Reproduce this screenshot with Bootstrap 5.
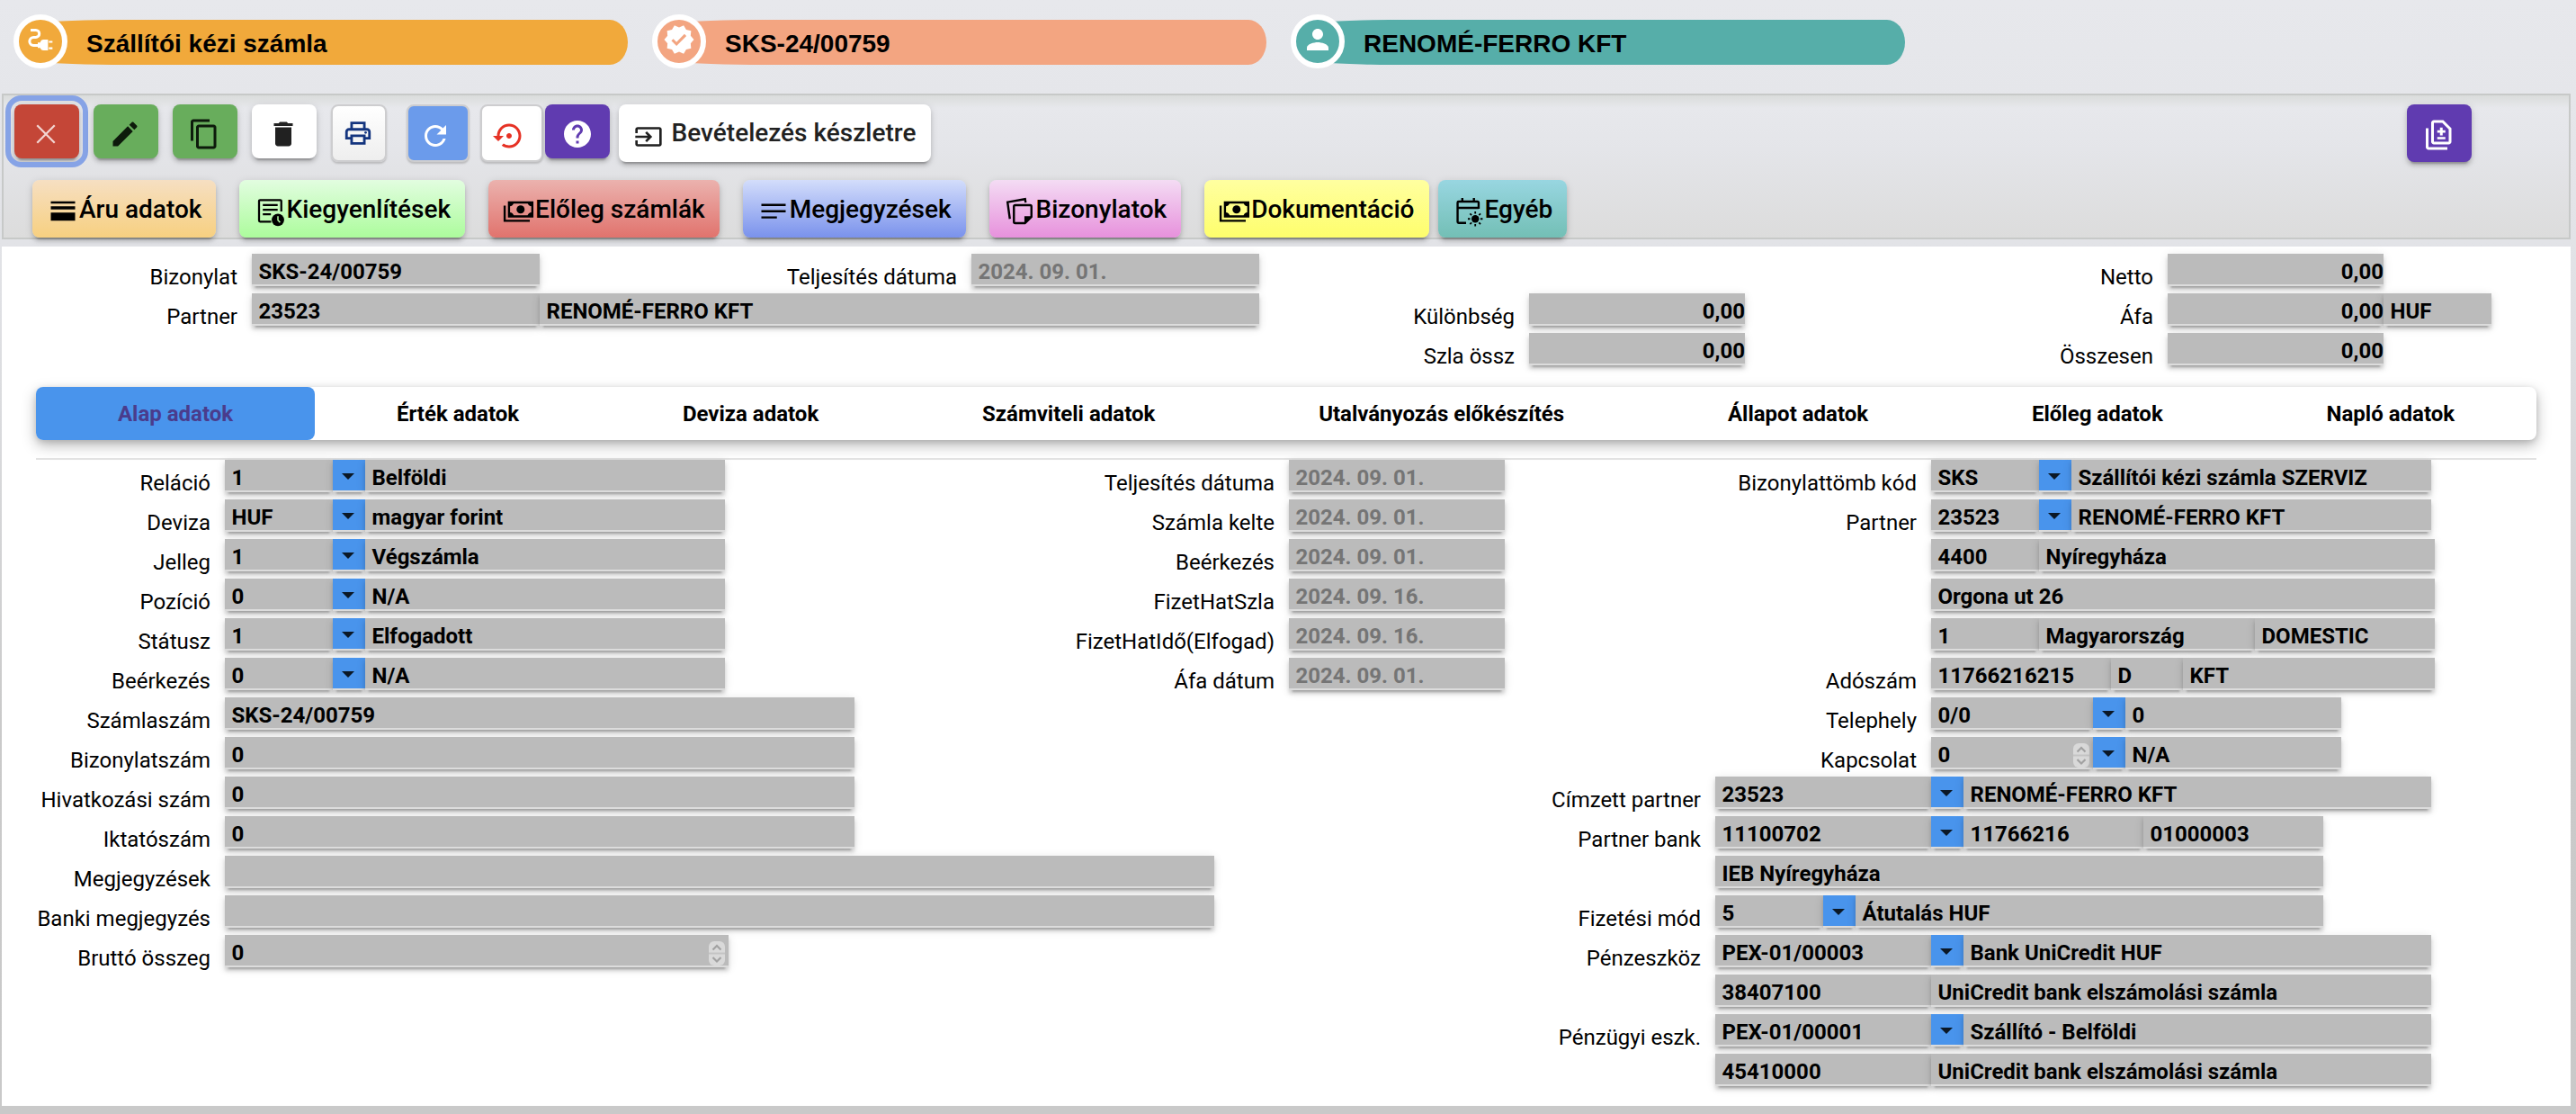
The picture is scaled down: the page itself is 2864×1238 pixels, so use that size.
<!DOCTYPE html>
<html lang="hu">
  <head>
    <meta charset="UTF-8" />
    <meta name="viewport" content="width=device-width, initial-scale=1" />
    <title>Szállítói kézi számla</title>
    <link
      href="https://cdn.jsdelivr.net/npm/bootstrap@5.3.3/dist/css/bootstrap.min.css"
      rel="stylesheet"
    />
    <style>
      :root {
        --elev: 0 6px 2px -4px rgba(0,0,0,.2), 0 4px 4px rgba(0,0,0,.14), 0 2px 10px rgba(0,0,0,.12);
      }
      body {
        height: 1238px;
        overflow: hidden;
        font-family: Roboto, "Liberation Sans", sans-serif;
        font-size: 24px;
        color: #000;
        background: linear-gradient(#e7e8ec 0, #e2e3e7 270px, #dcdde0 420px, #cacaca 800px, #c9c9c9 1238px);
      }
      svg { display: block; flex: none; fill: currentColor; }
      .ic36 { width: 36px; height: 36px; }

      /* header pills */
      .pill-head { gap: 27px; padding: 16px 0 0 15px; height: 104px; }
      .pill-item { width: 683px; height: 60px; }
      .pill-disc {
        width: 60px; height: 60px; border: 6px solid #fff; border-radius: 50%;
        color: #fff; z-index: 1; padding-bottom: 4px;
      }
      .pill-bar {
        height: 50px; margin: 2px 0 0 -30px; padding-left: 51px;
        border-radius: 80px 20px 20px 80px / 5px 25px 25px 5px;
        font: bold 28px/54px "Liberation Sans", sans-serif;
      }
      .c-orange { background: #f1a93b; }
      .c-salmon { background: #f3a581; }
      .c-teal { background: #56aea9; }

      /* toolbar */
      .tool-panel {
        height: 162px; margin: 0 6px 0 2px; border: 2px solid #c7c9c8; padding: 10px 108px 0 12px;
        background: linear-gradient(#dadcdb 0, #e7e8ec 14px, #e4e5e9 60px, #dcdcdc 158px);
      }
      .tool-row { height: 64px; }
      .tb {
        height: 60px; width: 72px; border-radius: 8px; box-shadow: var(--elev);
        display: flex; align-items: center; justify-content: center; padding: 6px 2px 0 0; margin-right: 16px;
      }
      .tb-ring { outline: 6px solid #86a3e6; outline-offset: 4px; color: #f2d5d1; }
      .tb-red { background: #c44637; }
      .tb-green { background: #68ad5c; color: #0d1a0b; }
      .tb-white { background: #fff; color: #212121; }
      .tb-purple { background: #603bb0; color: #fff; }
      .tb-help { margin-right: 10px; padding-right: 0; }
      .tb-slim { width: 70px; height: 64px; border: 2px solid #cdcdcf; box-shadow: 0 2px 2px #bcbcbe; margin-right: 12px; padding-right: 7px; }
      .tb-print { width: 62px; margin: 0 22px 0 0; background: linear-gradient(#fff, #eee); color: #14357f; padding: 0 3px 0 0; }
      .tb-blue { background: #6b9beb; color: #fff; }
      .tb-restore { background: #fff; color: #e63225; margin-right: 2px; }
      .tb-wide { width: 347px; height: 64px; font-size: 28px; font-weight: 500; line-height: 66px; padding: 0; gap: 10px; margin: 0; }
      .tb-diff { height: 64px; margin: 0; padding: 4px 0 0; }

      .nav-row { margin-top: 20px; padding-left: 20px; gap: 26px; }
      .nb {
        height: 64px; border-radius: 8px; padding: 0 16px; box-shadow: var(--elev);
        font-size: 28px; font-weight: 500; line-height: 66px; white-space: nowrap;
      }
      .nb svg { margin-top: 17px; }
      .nb-sand { background: linear-gradient(#f6dfc2, #f7d080); }
      .nb-mint { background: linear-gradient(#e2fde0, #acfc9c); }
      .nb-rose { background: linear-gradient(#ebb2ae, #e1736d); }
      .nb-blue { background: linear-gradient(#d3ddfb, #7a92ec); }
      .nb-pink { background: linear-gradient(#f4dcf4, #e791dc); }
      .nb-yellow { background: linear-gradient(#ffffa0, #fefe6c); }
      .nb-aqua { background: linear-gradient(#98d6e1, #73bfb5); margin-left: -16px; }

      /* form */
      .sheet { height: 955px; margin: 8px 6px 0 2px; padding: 8px 38px 0; }
      .fr { display: flex; height: 44px; white-space: nowrap; }
      .lb { flex: none; text-align: right; padding-right: 16px; line-height: 52px; }
      .fd {
        flex: none; height: 36px; padding-left: 7.5px; background: #bbb; border-bottom: 2px solid #dcdcdc;
        box-shadow: var(--elev); font-weight: 700; line-height: 40px;
      }
      .fd-date { color: #757575; }
      .fd-num { text-align: right; padding: 0; }
      .dd { flex: none; width: 36px; height: 36px; background: #4994ec; border-bottom: 2px solid #dcdcdc; box-shadow: var(--elev); }
      .dd::before {
        content: ""; display: block; margin: 15px 0 0 10px; width: 0;
        border: 7px solid transparent; border-top-color: #0b1826; border-bottom: 0;
      }
      .spin { display: flex; justify-content: space-between; padding-right: 4px; }
      .spin svg { margin-top: 7px; }

      .l210 { width: 210px; } .l234 { width: 234px; } .l240 { width: 240px; } .l300 { width: 300px; }
      .l323 { width: 323px; } .l470 { width: 470px; } .l474 { width: 474px; } .l480 { width: 480px; }
      .w80 { width: 80px; } .w120 { width: 120px; } .w180 { width: 180px; } .w200 { width: 200px; }
      .w240 { width: 240px; } .w280 { width: 280px; } .w320 { width: 320px; } .w400 { width: 400px; }
      .w440 { width: 440px; } .w520 { width: 520px; } .w556 { width: 556px; } .w560 { width: 560px; }
      .w676 { width: 676px; } .w700 { width: 700px; } .w800 { width: 800px; } .w1100 { width: 1100px; }
      .col-a { width: 1070px; } .col-b { width: 563px; } .col-c { width: 1147px; }
      .sum-a { width: 1360px; } .sum-b { width: 540px; padding-top: 44px; }

      .tabs { height: 59px; margin-top: 16px; border-radius: 8px; background: #fff; box-shadow: 0 6px 16px rgba(0,0,0,.28), 0 2px 6px rgba(0,0,0,.12); }
      .tabs .nav-link { padding: 0; height: 59px; line-height: 61px; font-weight: 700; color: #000; border-radius: 8px; }
      .tabs .nav-link.active { background: #4994ec; color: #4a3c8c; }
      .tab-body { margin-top: 20px; border-top: 2px solid #e2e2e2; }
    </style>
  </head>
  <body>

    <!-- Header -->
    <header class="pill-head d-flex">
      <div class="pill-item d-flex align-items-center">
        <div class="pill-disc c-orange d-flex align-items-center justify-content-center flex-shrink-0">
          <svg class="ic36" viewBox="0 0 24 24"><path d="M4.700 5h3.800a2.650 2.650 0 0 1 0 5.300H6.900a3 3 0 0 0 0 6h3.600" fill="none" stroke="currentColor" stroke-width="2"/><path d="M10 14.200h1.800c.300-1.400 1.200-2.200 2.500-2.200h3.300v8h-3.300c-1.300 0-2.200-.700-2.500-1.800H10zM18.200 13h2.700v1.400h-2.700zM18.200 17.700h2.700v1.400h-2.700z"/></svg>
        </div>
        <div class="pill-bar c-orange flex-grow-1">Szállítói kézi számla</div>
      </div>
      <div class="pill-item d-flex align-items-center">
        <div class="pill-disc c-salmon d-flex align-items-center justify-content-center flex-shrink-0">
          <svg class="ic36" viewBox="0 0 24 24"><path d="M23 12l-2.440-2.790.340-3.690-3.610-.820-1.890-3.200L12 2.960 8.600 1.500 6.710 4.690 3.100 5.500l.340 3.700L1 12l2.440 2.790-.340 3.700 3.610.820L8.600 22.500l3.400-1.470 3.400 1.460 1.890-3.190 3.610-.820-.340-3.690L23 12zm-12.910 4.720l-3.800-3.810 1.480-1.480 2.320 2.330 5.850-5.870 1.480 1.480-7.330 7.350z"/></svg>
        </div>
        <div class="pill-bar c-salmon flex-grow-1">SKS-24/00759</div>
      </div>
      <div class="pill-item d-flex align-items-center">
        <div class="pill-disc c-teal d-flex align-items-center justify-content-center flex-shrink-0">
          <svg class="ic36" viewBox="0 0 24 24"><path d="M12 12c2.210 0 4-1.790 4-4s-1.790-4-4-4-4 1.790-4 4 1.790 4 4 4zm0 2c-2.670 0-8 1.340-8 4v2h16v-2c0-2.660-5.330-4-8-4z"/></svg>
        </div>
        <div class="pill-bar c-teal flex-grow-1">RENOMÉ-FERRO KFT</div>
      </div>
    </header>

    <!-- Toolbar -->
    <section class="tool-panel">
      <div class="tool-row d-flex align-items-start">
        <div class="tb tb-red tb-ring"><svg class="ic36" viewBox="0 0 24 24"><path d="M5.500 5.500l13 13M18.500 5.500l-13 13" fill="none" stroke="currentColor" stroke-width="1.500"/></svg></div>
        <div class="tb tb-green"><svg class="ic36" viewBox="0 0 24 24"><path d="M3 17.250V21h3.750L17.810 9.940l-3.750-3.750L3 17.250zM20.710 7.040c.390-.390.390-1.020 0-1.410l-2.340-2.340c-.390-.390-1.020-.390-1.410 0l-1.830 1.830 3.750 3.750 1.830-1.830z"/></svg></div>
        <div class="tb tb-green"><svg class="ic36" viewBox="0 0 24 24"><path d="M16 1H4c-1.100 0-2 .900-2 2v14h2V3h12V1zm3 4H8c-1.100 0-2 .900-2 2v14c0 1.100.900 2 2 2h11c1.100 0 2-.900 2-2V7c0-1.100-.900-2-2-2zm0 16H8V7h11v14z"/></svg></div>
        <div class="tb tb-white me-3"><svg class="ic36" viewBox="0 0 24 24"><path d="M6 19c0 1.100.900 2 2 2h8c1.100 0 2-.900 2-2V7H6v12zM19 4h-3.500l-1-1h-5l-1 1H5v2h14V4z"/></svg></div>
        <div class="tb tb-slim tb-print"><svg width="34" height="34" viewBox="0 0 24 24"><path d="M19 8h-1V3H6v5H5c-1.660 0-3 1.340-3 3v6h4v4h12v-4h4v-6c0-1.660-1.340-3-3-3zM8 5h8v3H8V5zm8 12v2H8v-4h8v2zm2-2v-2H6v2H4v-4c0-.550.450-1 1-1h14c.550 0 1 .450 1 1v4h-2z"/><circle cx="18" cy="11.500" r="1"/></svg></div>
        <div class="tb tb-slim tb-blue"><svg class="ic36" viewBox="0 0 24 24"><path d="M17.650 6.350C16.200 4.900 14.210 4 12 4c-4.420 0-7.990 3.580-7.990 8s3.570 8 7.990 8c3.730 0 6.840-2.550 7.730-6h-2.080c-.820 2.330-3.040 4-5.650 4-3.310 0-6-2.690-6-6s2.690-6 6-6c1.660 0 3.140.690 4.220 1.780L13 11h7V4l-2.350 2.350z"/></svg></div>
        <div class="tb tb-slim tb-restore"><svg class="ic36" viewBox="0 0 24 24"><path d="M14 12c0-1.100-.900-2-2-2s-2 .900-2 2 .900 2 2 2 2-.900 2-2zm-2-9c-4.970 0-9 4.030-9 9H0l4 4 4-4H5c0-3.870 3.130-7 7-7s7 3.130 7 7-3.130 7-7 7c-1.510 0-2.910-.490-4.060-1.300l-1.420 1.440C8.040 20.300 9.940 21 12 21c4.970 0 9-4.030 9-9s-4.030-9-9-9z"/></svg></div>
        <div class="tb tb-purple tb-help"><svg class="ic36" viewBox="0 0 24 24"><path d="M12 2C6.480 2 2 6.480 2 12s4.480 10 10 10 10-4.480 10-10S17.520 2 12 2zm1 17h-2v-2h2v2zm2.070-7.750l-.900.920C13.450 12.900 13 13.500 13 15h-2v-.500c0-1.100.450-2.100 1.170-2.830l1.240-1.260c.370-.360.590-.860.590-1.410 0-1.100-.900-2-2-2s-2 .900-2 2H8c0-2.210 1.790-4 4-4s4 1.790 4 4c0 .880-.360 1.680-.930 2.250z"/></svg></div>
        <div class="tb tb-white tb-wide"><svg class="mt-2" width="32" height="32" viewBox="0 0 24 24"><path d="M21 4H3c-1.100 0-2 .800-2 1.800V9h2V5.800h18v12.400H3V15H1v3.200c0 1 .900 1.800 2 1.800h18c1.100 0 2-.800 2-1.800V5.800c0-1-.900-1.800-2-1.800zM10.600 16.500l4.500-4.500-4.500-4.500-1.400 1.400L11.300 11H1v2h10.300l-2.100 2.100z"/></svg>Bevételezés készletre</div>
        <div class="tb tb-purple tb-diff ms-auto"><svg class="ic36" viewBox="0 0 24 24"><path d="M18 23H4c-1.100 0-2-.900-2-2V7h2v14h14v2zM14.500 6.500h-2v2h-2v1.800h2v2h2v-2h2V8.500h-2zM16.500 13.500h-6v1.700h6zM15 1H8c-1.100 0-2 .900-2 2v14c0 1.100.900 2 2 2h11c1.100 0 2-.900 2-2V7l-6-6zm4 16H8V3h6.170L19 7.830V17z"/></svg></div>
      </div>

      <div class="nav-row d-flex">
        <div class="nb nb-sand d-flex"><svg class="ic36" viewBox="0 0 24 24"><path d="M3 4.500h18v1.600H3zM3 8.200h18v2.300H3zM3 12.800h18v6H3z"/></svg>Áru adatok</div>
        <div class="nb nb-mint d-flex"><svg class="ic36" viewBox="0 0 24 24"><path d="M20.500 12V4.300a.8.800 0 0 0-.800-.800H4.800a.8.800 0 0 0-.800.800v14.400a.8.800 0 0 0 .800.800H13M6.800 7.300h11M6.800 10.700h11M6.800 14h6" fill="none" stroke="currentColor" stroke-width="1.500"/><circle cx="18" cy="18.200" r="4.600"/><path d="M18 15.500v3l1.600 1.600" fill="none" stroke="#b4fca6" stroke-width="1"/></svg>Kiegyenlítések</div>
        <div class="nb nb-rose d-flex"><svg class="ic36" viewBox="0 0 24 24"><path d="M4.600 5.300h17.300v10.400H4.600z M1.400 7.700v11.200H20" fill="none" stroke="currentColor" stroke-width="1.600"/><path d="M5 5h3.200A3.200 3.200 0 0 1 5 8.200zM21.500 5h-3.200a3.200 3.200 0 0 0 3.200 3.200zM5 15.800h3.200A3.200 3.200 0 0 0 5 12.600zM21.500 15.800h-3.200a3.200 3.200 0 0 1 3.200-3.200z"/><circle cx="13.200" cy="10.500" r="3"/></svg>Előleg számlák</div>
        <div class="nb nb-blue d-flex"><svg class="ic36" viewBox="0 0 24 24"><path d="M3 17.200h11.500v-1.600H3zM3 6.400V8h18V6.400zM3 12.600h18V11H3z"/></svg>Megjegyzések</div>
        <div class="nb nb-pink d-flex"><svg class="ic36" viewBox="0 0 24 24"><path d="M4.500 17.500L2.800 5.100 15.800 2.800l.400 2.600M20.500 16V8.300a1 1 0 0 0-1-1H8.500a1 1 0 0 0-1 1v11.400a1 1 0 0 0 1 1h7.200z" fill="none" stroke="currentColor" stroke-width="1.600"/><path d="M15.300 21v-5.500H21z"/></svg>Bizonylatok</div>
        <div class="nb nb-yellow d-flex"><svg class="ic36" viewBox="0 0 24 24"><path d="M4.600 5.300h17.300v10.400H4.600z M1.400 7.700v11.200H20" fill="none" stroke="currentColor" stroke-width="1.600"/><path d="M5 5h3.200A3.200 3.200 0 0 1 5 8.200zM21.500 5h-3.200a3.200 3.200 0 0 0 3.200 3.200zM5 15.800h3.200A3.200 3.200 0 0 0 5 12.600zM21.500 15.800h-3.200a3.200 3.200 0 0 1 3.200-3.200z"/><circle cx="13.200" cy="10.500" r="3"/></svg>Dokumentáció</div>
        <div class="nb nb-aqua d-flex"><svg class="ic36" viewBox="0 0 24 24"><path d="M10 20.500H4.500a.8.800 0 0 1-.800-.800V5.500a.8.800 0 0 1 .8-.8h14a.8.800 0 0 1 .8.800v4.500M3.700 9.300h15.600M7.200 2v3M15.800 2v3" fill="none" stroke="currentColor" stroke-width="1.600"/><circle cx="16.800" cy="17.500" r="2.800"/><path d="M16.800 12v1.700M16.800 21.300V23M11.300 17.500H13M20.600 17.500h1.700M12.900 13.600l1.200 1.200M19.500 20.200l1.200 1.200M12.900 21.400l1.200-1.200M19.500 14.800l1.200-1.200" stroke="currentColor" stroke-width="1.200"/></svg>Egyéb</div>
      </div>
    </section>

    <main class="sheet bg-white">

      <!-- Summary -->
      <div class="d-flex">
        <div class="sum-a flex-shrink-0">
          <div class="fr"><div class="lb l240">Bizonylat</div><div class="fd w320">SKS-24/00759</div><div class="lb l480">Teljesítés dátuma</div><div class="fd fd-date w320">2024. 09. 01.</div></div>
          <div class="fr"><div class="lb l240">Partner</div><div class="fd w320">23523</div><div class="fd w800">RENOMÉ-FERRO KFT</div></div>
        </div>
        <div class="sum-b flex-shrink-0">
          <div class="fr"><div class="lb l300">Különbség</div><div class="fd fd-num w240">0,00</div></div>
          <div class="fr"><div class="lb l300">Szla össz</div><div class="fd fd-num w240">0,00</div></div>
        </div>
        <div>
          <div class="fr"><div class="lb l470">Netto</div><div class="fd fd-num w240">0,00</div></div>
          <div class="fr"><div class="lb l470">Áfa</div><div class="fd fd-num w240">0,00</div><div class="fd w120">HUF</div></div>
          <div class="fr"><div class="lb l470">Összesen</div><div class="fd fd-num w240">0,00</div></div>
        </div>
      </div>

      <!-- Tabs -->
      <nav class="tabs nav nav-pills d-flex flex-nowrap text-center">
        <a class="nav-link active flex-fill">Alap adatok</a>
        <a class="nav-link flex-fill">Érték adatok</a>
        <a class="nav-link flex-fill">Deviza adatok</a>
        <a class="nav-link flex-fill">Számviteli adatok</a>
        <a class="nav-link flex-fill">Utalványozás előkészítés</a>
        <a class="nav-link flex-fill">Állapot adatok</a>
        <a class="nav-link flex-fill">Előleg adatok</a>
        <a class="nav-link flex-fill">Napló adatok</a>
      </nav>

      <!-- Basic data -->
      <div class="tab-body d-flex">
        <div class="col-a flex-shrink-0">
          <div class="fr"><div class="lb l210">Reláció</div><div class="fd w120">1</div><div class="dd"></div><div class="fd w400">Belföldi</div></div>
          <div class="fr"><div class="lb l210">Deviza</div><div class="fd w120">HUF</div><div class="dd"></div><div class="fd w400">magyar forint</div></div>
          <div class="fr"><div class="lb l210">Jelleg</div><div class="fd w120">1</div><div class="dd"></div><div class="fd w400">Végszámla</div></div>
          <div class="fr"><div class="lb l210">Pozíció</div><div class="fd w120">0</div><div class="dd"></div><div class="fd w400">N/A</div></div>
          <div class="fr"><div class="lb l210">Státusz</div><div class="fd w120">1</div><div class="dd"></div><div class="fd w400">Elfogadott</div></div>
          <div class="fr"><div class="lb l210">Beérkezés</div><div class="fd w120">0</div><div class="dd"></div><div class="fd w400">N/A</div></div>
          <div class="fr"><div class="lb l210">Számlaszám</div><div class="fd w700">SKS-24/00759</div></div>
          <div class="fr"><div class="lb l210">Bizonylatszám</div><div class="fd w700">0</div></div>
          <div class="fr"><div class="lb l210">Hivatkozási szám</div><div class="fd w700">0</div></div>
          <div class="fr"><div class="lb l210">Iktatószám</div><div class="fd w700">0</div></div>
          <div class="fr"><div class="lb l210">Megjegyzések</div><div class="fd w1100"></div></div>
          <div class="fr"><div class="lb l210">Banki megjegyzés</div><div class="fd w1100"></div></div>
          <div class="fr"><div class="lb l210">Bruttó összeg</div><div class="fd spin w560">0<svg width="18" height="27" viewBox="0 0 18 27"><rect width="18" height="27" rx="6" fill="#d9d9d9"/><path d="M0 13.500h18" stroke="#c4c4c4" stroke-width="2"/><path d="M4.500 9.500L9 5l4.500 4.500M4.500 18L9 22.500l4.500-4.500" fill="none" stroke="#a2a2a2" stroke-width="2.200"/></svg></div></div>
        </div>

        <div class="col-b flex-shrink-0">
          <div class="fr"><div class="lb l323">Teljesítés dátuma</div><div class="fd fd-date w240">2024. 09. 01.</div></div>
          <div class="fr"><div class="lb l323">Számla kelte</div><div class="fd fd-date w240">2024. 09. 01.</div></div>
          <div class="fr"><div class="lb l323">Beérkezés</div><div class="fd fd-date w240">2024. 09. 01.</div></div>
          <div class="fr"><div class="lb l323">FizetHatSzla</div><div class="fd fd-date w240">2024. 09. 16.</div></div>
          <div class="fr"><div class="lb l323">FizetHatIdő(Elfogad)</div><div class="fd fd-date w240">2024. 09. 16.</div></div>
          <div class="fr"><div class="lb l323">Áfa dátum</div><div class="fd fd-date w240">2024. 09. 01.</div></div>
        </div>

        <div class="col-c flex-shrink-0">
          <div class="fr"><div class="lb l474">Bizonylattömb kód</div><div class="fd w120">SKS</div><div class="dd"></div><div class="fd w400">Szállítói kézi számla SZERVIZ</div></div>
          <div class="fr"><div class="lb l474">Partner</div><div class="fd w120">23523</div><div class="dd"></div><div class="fd w400">RENOMÉ-FERRO KFT</div></div>
          <div class="fr"><div class="lb l474"></div><div class="fd w120">4400</div><div class="fd w440">Nyíregyháza</div></div>
          <div class="fr"><div class="lb l474"></div><div class="fd w560">Orgona ut 26</div></div>
          <div class="fr"><div class="lb l474"></div><div class="fd w120">1</div><div class="fd w240">Magyarország</div><div class="fd w200">DOMESTIC</div></div>
          <div class="fr"><div class="lb l474">Adószám</div><div class="fd w200">11766216215</div><div class="fd w80">D</div><div class="fd w280">KFT</div></div>
          <div class="fr"><div class="lb l474">Telephely</div><div class="fd w180">0/0</div><div class="dd"></div><div class="fd w240">0</div></div>
          <div class="fr"><div class="lb l474">Kapcsolat</div><div class="fd spin w180">0<svg width="18" height="27" viewBox="0 0 18 27"><rect width="18" height="27" rx="6" fill="#d9d9d9"/><path d="M0 13.500h18" stroke="#c4c4c4" stroke-width="2"/><path d="M4.500 9.500L9 5l4.500 4.500M4.500 18L9 22.500l4.500-4.500" fill="none" stroke="#a2a2a2" stroke-width="2.200"/></svg></div><div class="dd"></div><div class="fd w240">N/A</div></div>
          <div class="fr"><div class="lb l234">Címzett partner</div><div class="fd w240">23523</div><div class="dd"></div><div class="fd w520">RENOMÉ-FERRO KFT</div></div>
          <div class="fr"><div class="lb l234">Partner bank</div><div class="fd w240">11100702</div><div class="dd"></div><div class="fd w200">11766216</div><div class="fd w200">01000003</div></div>
          <div class="fr"><div class="lb l234"></div><div class="fd w676">IEB Nyíregyháza</div></div>
          <div class="fr"><div class="lb l234">Fizetési mód</div><div class="fd w120">5</div><div class="dd"></div><div class="fd w520">Átutalás HUF</div></div>
          <div class="fr"><div class="lb l234">Pénzeszköz</div><div class="fd w240">PEX-01/00003</div><div class="dd"></div><div class="fd w520">Bank UniCredit HUF</div></div>
          <div class="fr"><div class="lb l234"></div><div class="fd w240">38407100</div><div class="fd w556">UniCredit bank elszámolási számla</div></div>
          <div class="fr"><div class="lb l234">Pénzügyi eszk.</div><div class="fd w240">PEX-01/00001</div><div class="dd"></div><div class="fd w520">Szállító - Belföldi</div></div>
          <div class="fr"><div class="lb l234"></div><div class="fd w240">45410000</div><div class="fd w556">UniCredit bank elszámolási számla</div></div>
        </div>
      </div>
    </main>

    <script src="https://cdn.jsdelivr.net/npm/bootstrap@5.3.3/dist/js/bootstrap.bundle.min.js"></script>
  </body>
</html>
